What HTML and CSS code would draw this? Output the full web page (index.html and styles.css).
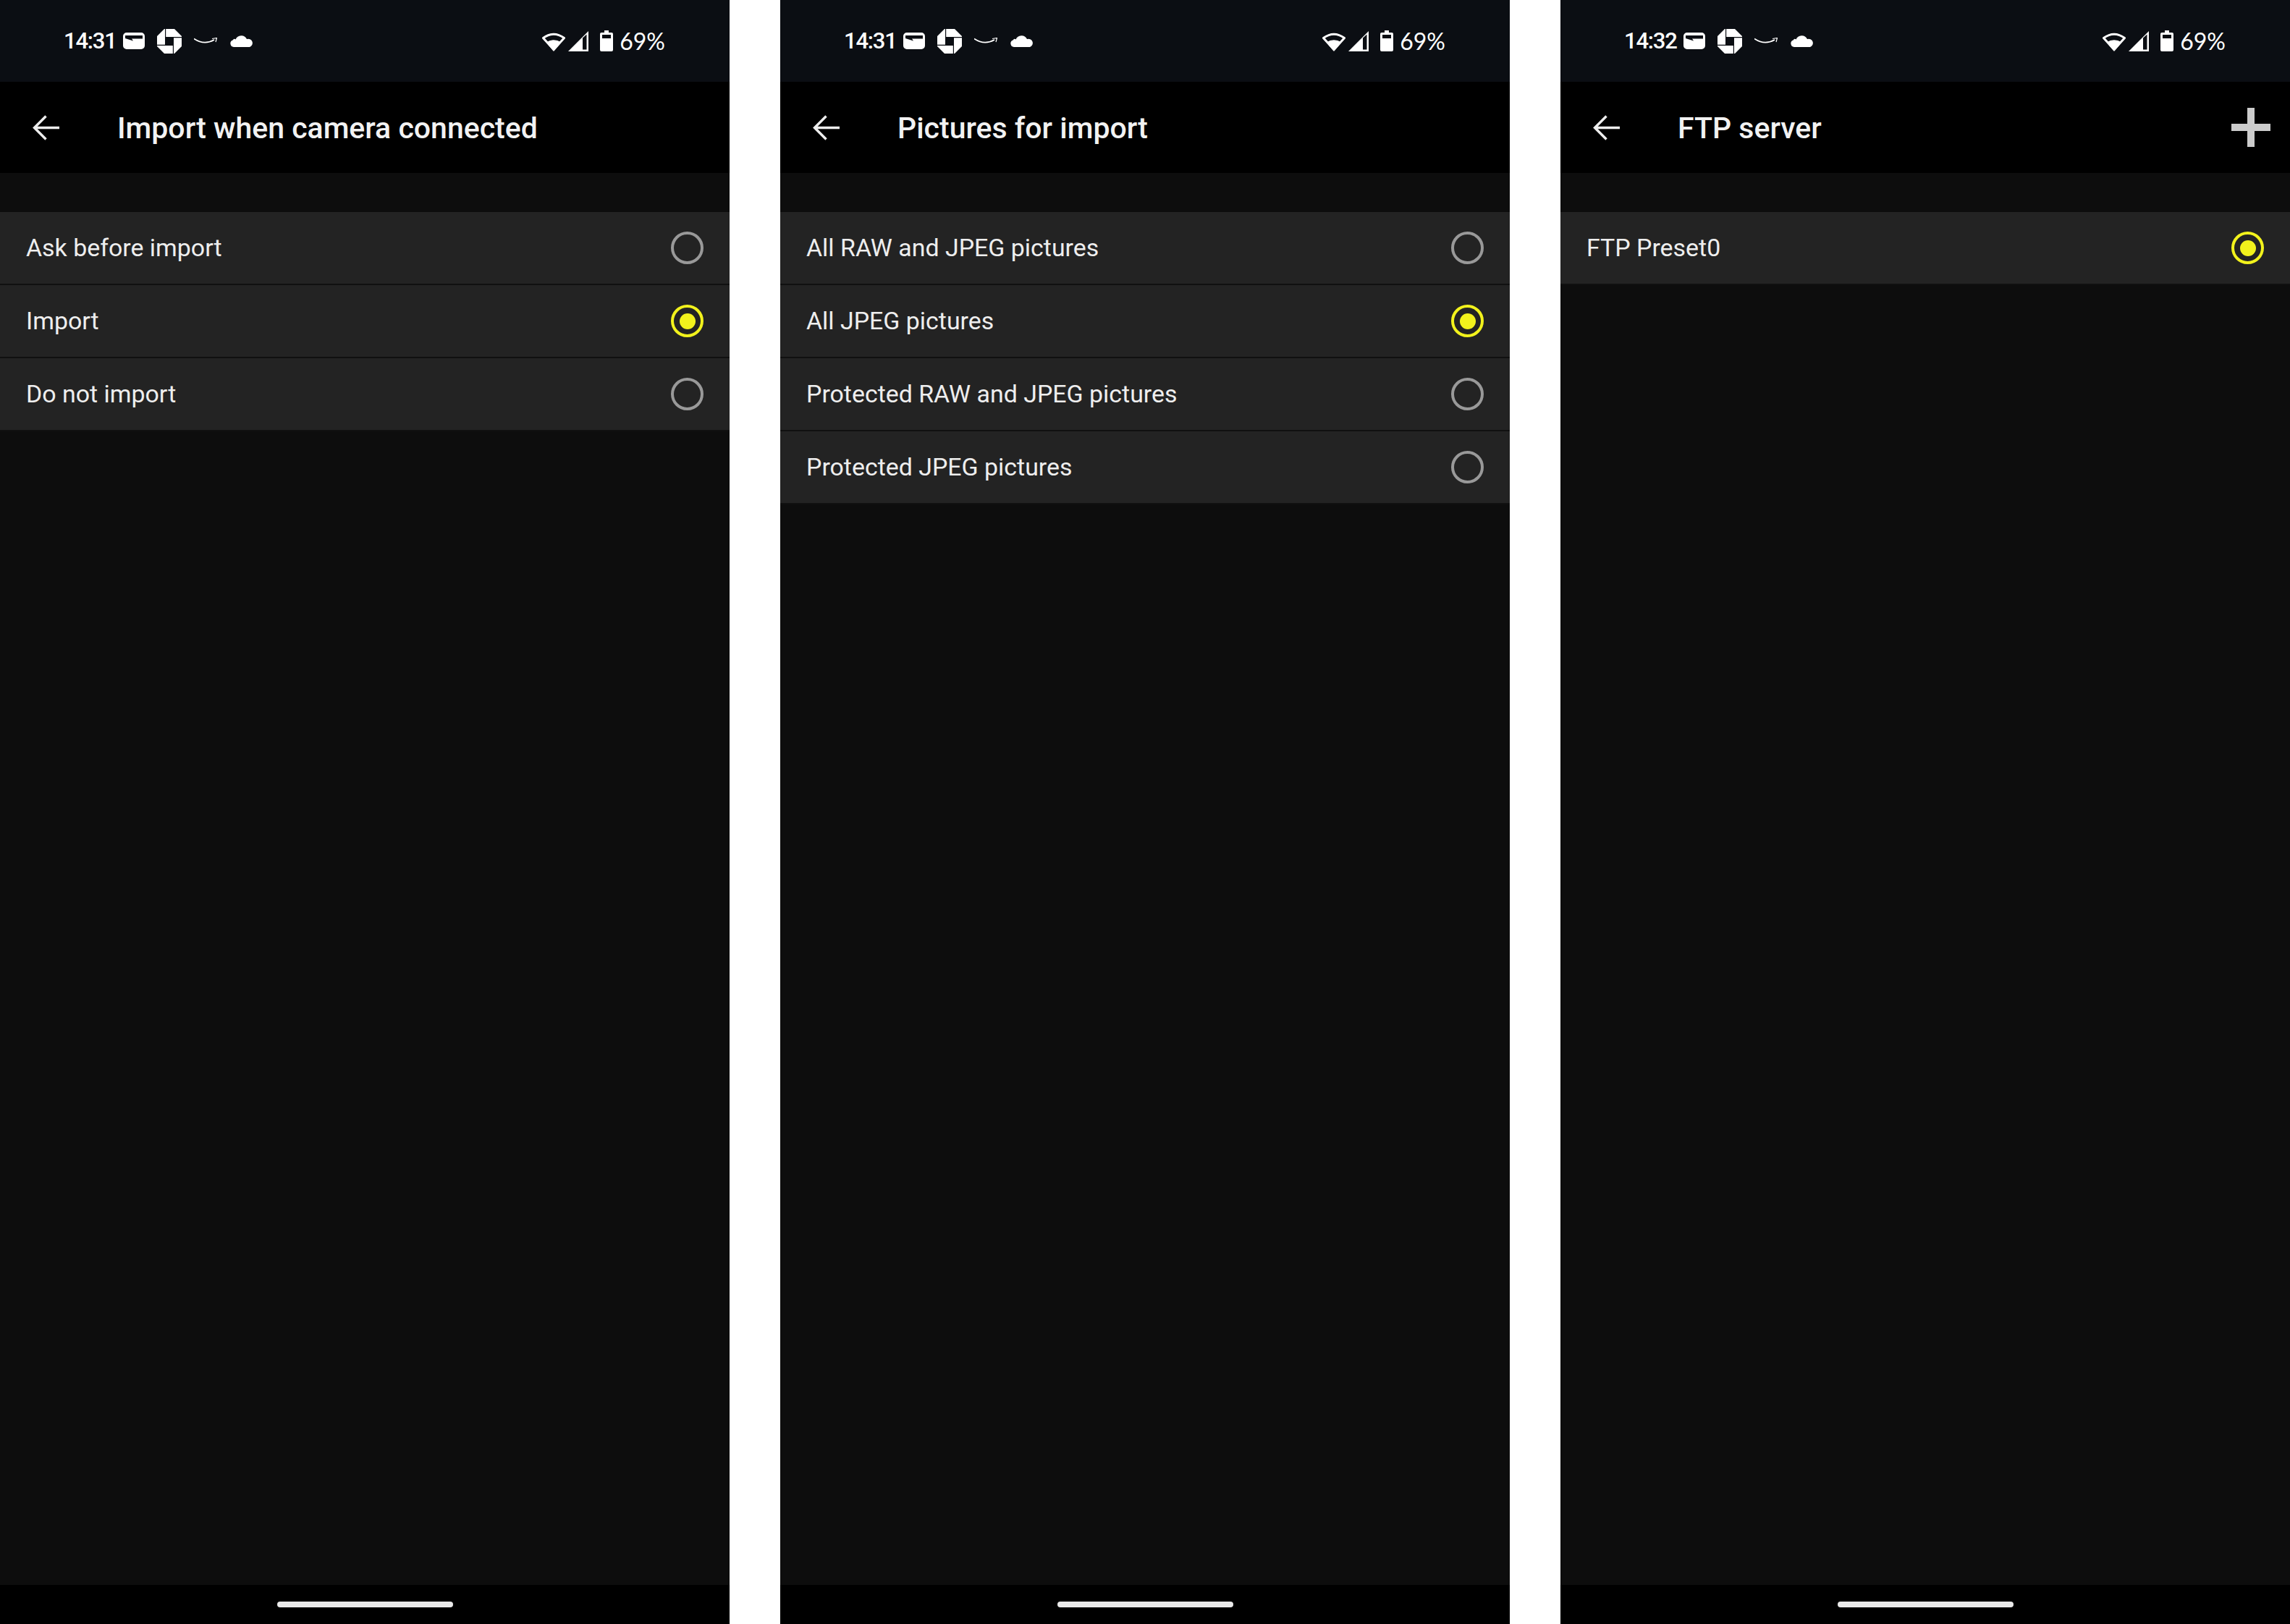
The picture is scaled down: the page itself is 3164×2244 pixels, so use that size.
FILE: index.html
```html
<!DOCTYPE html>
<html lang="en">
<head>
    <meta charset="UTF-8">
    <title>Camera import settings</title>
    <link rel="stylesheet" href="styles.css">
</head>
<body>
    <svg class="defs" width="0" height="0" aria-hidden="true">
        <symbol id="icon-card" viewBox="0 0 30 23">
            <path fill-rule="evenodd" d="M5 0H25A5 5 0 0 1 30 5V18A5 5 0 0 1 25 23H5A5 5 0 0 1 0 18V5A5 5 0 0 1 5 0ZM3 4V8L14 11.5L12 8.5H27V4Z"/>
        </symbol>
        <symbol id="icon-chase" viewBox="0 0 34 34">
            <polygon id="chase-part" points="12.2,0 24,0 34,10 34,11 12.2,11"/>
            <use href="#chase-part" transform="rotate(90 17 17)"/>
            <use href="#chase-part" transform="rotate(180 17 17)"/>
            <use href="#chase-part" transform="rotate(270 17 17)"/>
        </symbol>
        <symbol id="icon-amazon" viewBox="0 0 32 9">
            <path d="M0 1.5Q14 11 28 3" fill="none" stroke="currentColor" stroke-width="1.8"/>
            <path d="M25 1.5L31.5 0.5L30 6" fill="none" stroke="currentColor" stroke-width="1.2"/>
        </symbol>
        <symbol id="icon-cloud" viewBox="0 0 32 17">
            <path d="M5 17A5 5 0 0 1 4 7.2A2 2 0 0 1 7.5 6.5A8.5 8.5 0 0 1 23 6A5.6 5.6 0 0 1 27 17Z"/>
        </symbol>
        <symbol id="icon-wifi" viewBox="0 0 34 28">
            <path d="M17 25.5L2.5 9.5Q17 -1 31.5 9.5Z" fill="none" stroke="currentColor" stroke-width="3" stroke-linejoin="round"/>
            <path d="M17 28L6.5 15.5Q17 9 27.5 15.5Z"/>
        </symbol>
        <symbol id="icon-signal" viewBox="0 0 28 28">
            <path fill-rule="evenodd" d="M0 28L28 0V28ZM20 9.5V25.5H25.5V4.5Z"/>
        </symbol>
        <symbol id="icon-battery" viewBox="0 0 18 29">
            <path fill-rule="evenodd" d="M6 0H12V3H16A2 2 0 0 1 18 5V27A2 2 0 0 1 16 29H2A2 2 0 0 1 0 27V5A2 2 0 0 1 2 3H6ZM3 6V11H15V6Z"/>
        </symbol>
        <symbol id="icon-back" viewBox="0 0 37 35">
            <path d="M37 17.5H3M18.5 1.5L2.5 17.5L18.5 33.5" fill="none" stroke="currentColor" stroke-width="3.4"/>
        </symbol>
    </svg>

    <div class="screen">
        <div class="status-bar">
            <div class="status-left">
                <span class="time">14:31</span>
                <svg class="ic-card"><use href="#icon-card"/></svg>
                <svg class="ic-chase"><use href="#icon-chase"/></svg>
                <svg class="ic-amazon"><use href="#icon-amazon"/></svg>
                <svg class="ic-cloud"><use href="#icon-cloud"/></svg>
            </div>
            <div class="status-right">
                <svg class="ic-wifi"><use href="#icon-wifi"/></svg>
                <svg class="ic-signal"><use href="#icon-signal"/></svg>
                <svg class="ic-battery"><use href="#icon-battery"/></svg>
                <span class="percent">69%</span>
            </div>
        </div>
        <div class="toolbar">
            <svg class="ic-back"><use href="#icon-back"/></svg>
            <h1>Import when camera connected</h1>
        </div>
        <div class="content">
            <div class="row"><span>Ask before import</span><i class="radio"></i></div>
            <div class="row"><span>Import</span><i class="radio checked"></i></div>
            <div class="row"><span>Do not import</span><i class="radio"></i></div>
        </div>
        <div class="nav-bar"><div class="home-pill"></div></div>
    </div>

    <div class="screen">
        <div class="status-bar">
            <div class="status-left">
                <span class="time">14:31</span>
                <svg class="ic-card"><use href="#icon-card"/></svg>
                <svg class="ic-chase"><use href="#icon-chase"/></svg>
                <svg class="ic-amazon"><use href="#icon-amazon"/></svg>
                <svg class="ic-cloud"><use href="#icon-cloud"/></svg>
            </div>
            <div class="status-right">
                <svg class="ic-wifi"><use href="#icon-wifi"/></svg>
                <svg class="ic-signal"><use href="#icon-signal"/></svg>
                <svg class="ic-battery"><use href="#icon-battery"/></svg>
                <span class="percent">69%</span>
            </div>
        </div>
        <div class="toolbar">
            <svg class="ic-back"><use href="#icon-back"/></svg>
            <h1>Pictures for import</h1>
        </div>
        <div class="content">
            <div class="row"><span>All RAW and JPEG pictures</span><i class="radio"></i></div>
            <div class="row"><span>All JPEG pictures</span><i class="radio checked"></i></div>
            <div class="row"><span>Protected RAW and JPEG pictures</span><i class="radio"></i></div>
            <div class="row"><span>Protected JPEG pictures</span><i class="radio"></i></div>
        </div>
        <div class="nav-bar"><div class="home-pill"></div></div>
    </div>

    <div class="screen">
        <div class="status-bar">
            <div class="status-left">
                <span class="time">14:32</span>
                <svg class="ic-card"><use href="#icon-card"/></svg>
                <svg class="ic-chase"><use href="#icon-chase"/></svg>
                <svg class="ic-amazon"><use href="#icon-amazon"/></svg>
                <svg class="ic-cloud"><use href="#icon-cloud"/></svg>
            </div>
            <div class="status-right">
                <svg class="ic-wifi"><use href="#icon-wifi"/></svg>
                <svg class="ic-signal"><use href="#icon-signal"/></svg>
                <svg class="ic-battery"><use href="#icon-battery"/></svg>
                <span class="percent">69%</span>
            </div>
        </div>
        <div class="toolbar">
            <svg class="ic-back"><use href="#icon-back"/></svg>
            <h1>FTP server</h1>
            <div class="add-btn"></div>
        </div>
        <div class="content">
            <div class="row"><span>FTP Preset0</span><i class="radio checked"></i></div>
        </div>
        <div class="nav-bar"><div class="home-pill"></div></div>
    </div>
</body>
</html>
```

FILE: styles.css
```css
html, body {
    margin: 0;
    height: 100%;
}
body {
    display: flex;
    justify-content: space-between;
    height: 2244px;
    overflow: hidden;
    background-color: #fff;
    font-family: Roboto, sans-serif;
}
.defs {
    position: absolute;
}
.screen {
    width: 1008px;
    display: flex;
    flex-direction: column;
    background-color: #0d0d0d;
}
.status-bar {
    height: 113px;
    flex: none;
    box-sizing: border-box;
    padding: 0 89px 0 88px;
    display: flex;
    align-items: center;
    justify-content: space-between;
    background-color: #0b0e13;
    color: #fff;
    fill: #fff;
}
.status-left, .status-right {
    display: flex;
    align-items: center;
}
.time {
    font-size: 31px;
    font-weight: 500;
    line-height: 32px;
    letter-spacing: -1.2px;
}
.percent {
    font-family: Lato, sans-serif;
    font-size: 32px;
    line-height: 32px;
    margin-left: 9px;
}
.ic-card { width: 30px; height: 23px; margin-left: 9px; }
.ic-chase { width: 34px; height: 34px; margin-left: 17px; }
.ic-amazon { width: 32px; height: 9px; margin-left: 17px; }
.ic-cloud { width: 32px; height: 17px; margin-left: 18px; }
.ic-wifi { width: 34px; height: 28px; }
.ic-signal { width: 28px; height: 28px; margin-left: 3px; }
.ic-battery { width: 18px; height: 29px; margin-left: 16px; }
.toolbar {
    height: 126px;
    flex: none;
    box-sizing: border-box;
    padding: 0 27px 0 45px;
    display: flex;
    align-items: center;
    background-color: #000;
    color: #eee;
}
.ic-back {
    width: 37px;
    height: 35px;
    flex: none;
}
.toolbar h1 {
    margin: 0 0 0 80px;
    padding-top: 2px;
    font-size: 41px;
    font-weight: 500;
    color: #f2f2f2;
}
.add-btn {
    position: relative;
    width: 54px;
    height: 54px;
    margin-left: auto;
}
.add-btn::before, .add-btn::after {
    content: "";
    position: absolute;
    background-color: #ccc;
}
.add-btn::before {
    left: 0;
    right: 0;
    top: 22px;
    height: 10px;
}
.add-btn::after {
    top: 0;
    bottom: 0;
    left: 22px;
    width: 10px;
}
.content {
    flex: 1;
    padding-top: 54px;
}
.row {
    height: 99px;
    box-sizing: content-box;
    padding: 0 36px;
    display: flex;
    align-items: center;
    justify-content: space-between;
    background-color: #232323;
    border-bottom: 2px solid #101010;
    color: #eee;
    font-size: 33.9px;
}
.radio {
    width: 45px;
    height: 45px;
    box-sizing: border-box;
    border: 4.5px solid #999;
    border-radius: 50%;
    display: flex;
    align-items: center;
    justify-content: center;
}
.radio.checked {
    border-color: #f2f21c;
}
.radio.checked::after {
    content: "";
    width: 22px;
    height: 22px;
    border-radius: 50%;
    background-color: #f2f21c;
}
.nav-bar {
    height: 54px;
    flex: none;
    display: flex;
    justify-content: center;
    padding-top: 23px;
    box-sizing: border-box;
    background-color: #000;
}
.home-pill {
    width: 243px;
    height: 8px;
    border-radius: 4px;
    background-color: #eaeaea;
}
```
